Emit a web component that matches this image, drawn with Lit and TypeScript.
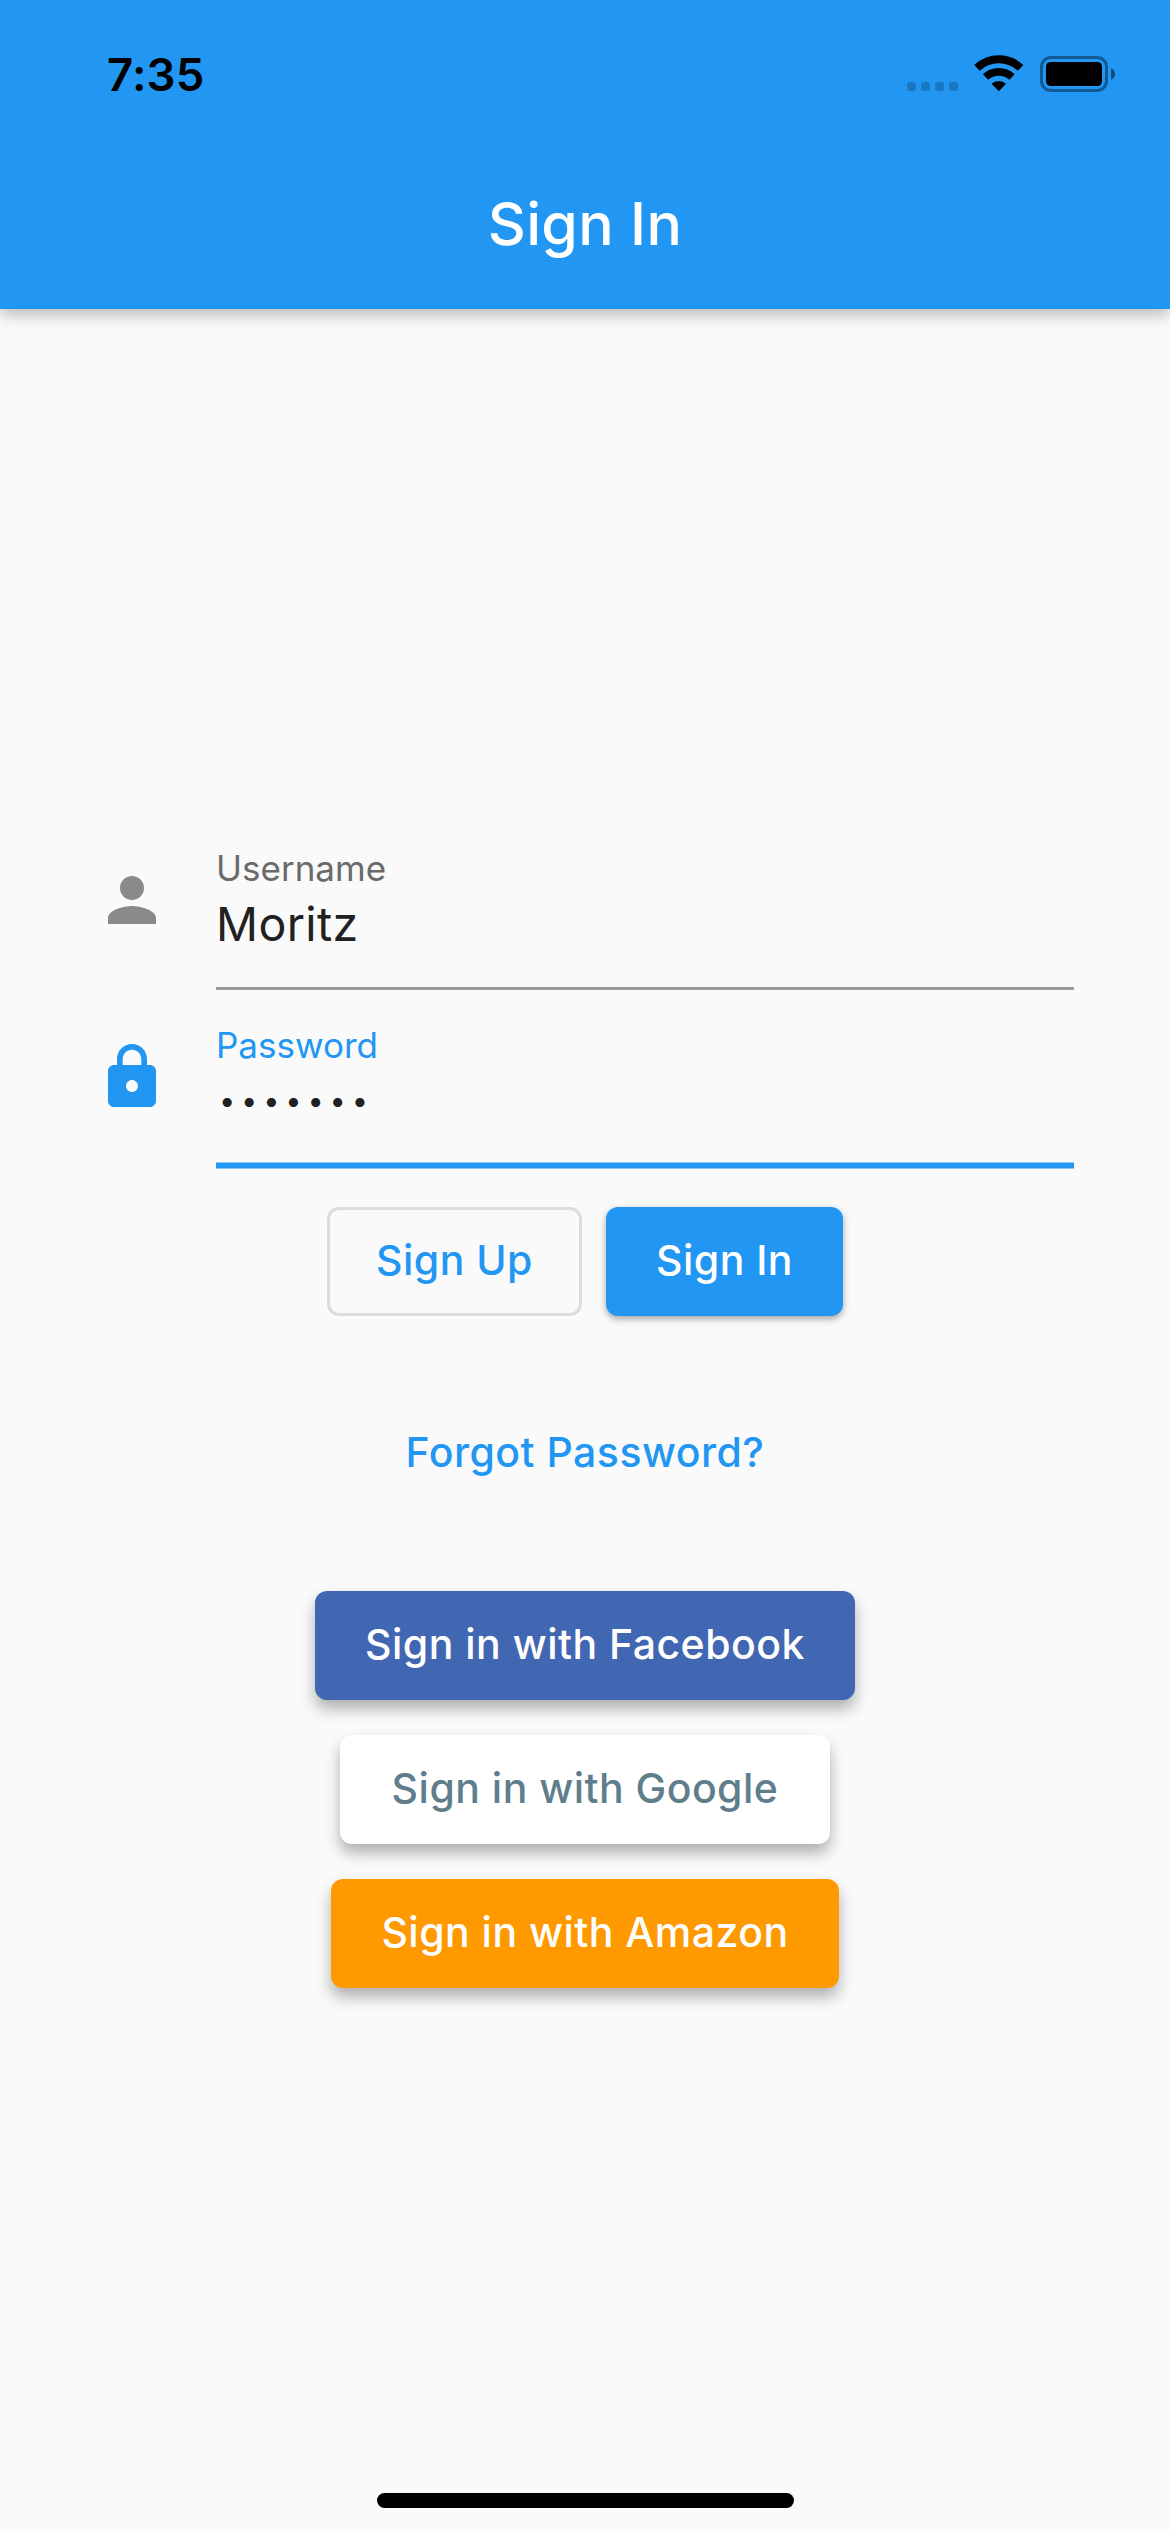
import { LitElement, html, css, svg } from "lit";
import { customElement, property } from "lit/decorators.js";

const FONT = css`"Inter", "Roboto", "Liberation Sans", sans-serif`;

const PERSON =
  "M12 12c2.21 0 4-1.79 4-4s-1.79-4-4-4-4 1.79-4 4 1.79 4 4 4zm0 2c-2.67 0-8 1.34-8 4v2h16v-2c0-2.66-5.33-4-8-4z";
const LOCK =
  "M18 8h-1V6c0-2.76-2.24-5-5-5S7 3.24 7 6v2H6c-1.1 0-2 .9-2 2v10c0 1.1.9 2 2 2h12c1.1 0 2-.9 2-2V10c0-1.1-.9-2-2-2zm-6 9c-1.1 0-2-.9-2-2s.9-2 2-2 2 .9 2 2-.9 2-2 2zm3.1-9H8.9V6c0-1.71 1.39-3.1 3.1-3.1 1.71 0 3.1 1.39 3.1 3.1v2z";

@customElement("status-bar")
export class StatusBar extends LitElement {
  static styles = css`
    :host {
      display: flex;
      justify-content: space-between;
      align-items: flex-start;
      height: 141px;
      box-sizing: border-box;
      padding: 50px 52px 0 107px;
      color: #000;
    }
    .time {
      font: 600 45.5px/50px ${FONT};
      letter-spacing: 0.2px;
    }
    .icons {
      display: block;
    }
  `;
  render() {
    return html`
      <span class="time">7:35</span>
      <svg class="icons" width="211" height="50" viewBox="0 0 211 50">
        ${[0, 14, 28, 42].map(
          (x) => svg`<rect x=${x} y="32" width="9" height="9" rx="3.2" fill="#000" fill-opacity=".2"/>`
        )}
        <g transform="translate(91.8 41.2)" fill="none" stroke="#000" stroke-width="7.8">
          <path d="M-21.8-23.4A32 32 0 0 1 21.8-23.4" />
          <path d="M-13.2-14.2A19.4 19.4 0 0 1 13.2-14.2" />
          <path d="M0 0L-7.2-7.4A10.6 10.6 0 0 1 7.2-7.4Z" fill="#000" stroke="none" />
        </g>
        <rect x="134.5" y="7.5" width="65" height="33" rx="9.5" fill="none" stroke="#000" stroke-opacity=".4" stroke-width="3" />
        <rect x="139" y="12" width="56" height="24" rx="4.5" fill="#000" />
        <path d="M204 18.2c2.6 1 4 3.2 4 5.8s-1.4 4.800-4 5.800z" fill="#000" fill-opacity=".5" />
      </svg>
    `;
  }
}

@customElement("text-field")
export class TextField extends LitElement {
  @property() label = "";
  @property() value = "";
  @property() icon = "";
  @property({ type: Boolean, reflect: true }) focused = false;
  @property({ type: Boolean, reflect: true }) secret = false;

  static styles = css`
    :host {
      display: grid;
      grid-template-columns: 72px 1fr;
      column-gap: 48px;
      font-family: ${FONT};
      color: #8a8a8a;
    }
    :host([focused]) {
      color: #2196f3;
    }
    .icon {
      width: 72px;
      height: 72px;
      margin-top: 17px;
      fill: currentColor;
    }
    .box {
      display: flex;
      flex-direction: column;
    }
    .label {
      font-size: 35px;
      line-height: 43px;
      color: #6a6a6a;
    }
    :host([focused]) .label {
      color: inherit;
    }
    .value {
      font-size: 46.5px;
      line-height: 68px;
      letter-spacing: 0.4px;
      color: #212121;
    }
    :host([secret]) .value {
      padding-left: 3px;
      font-size: 29px;
      letter-spacing: 5.8px;
    }
    .line {
      height: 3px;
      margin-top: 29px;
      background: #9b9b9b;
    }
    :host([focused]) .line {
      height: 7px;
      margin-top: 27px;
      background: linear-gradient(#8ec8f6 1px, #2196f3 1px 6px, #8ec8f6 6px);
    }
  `;
  render() {
    return html`
      <svg class="icon" viewBox="0 0 24 24"><path d=${this.icon} /></svg>
      <div class="box">
        <span class="label">${this.label}</span>
        <span class="value">${this.secret ? "•".repeat(this.value.length) : this.value}</span>
        <div class="line"></div>
      </div>
    `;
  }
}

@customElement("app-root")
export class AppRoot extends LitElement {
  static styles = css`
    :host {
      display: flex;
      flex-direction: column;
      width: 1170px;
      height: 2532px;
      background: #fafafa;
      font-family: ${FONT};
    }
    .header {
      height: 309px;
      background: #2196f3;
      box-shadow: 0 5px 15px rgba(0, 0, 0, 0.28);
    }
    .title {
      margin: 0;
      padding-top: 43px;
      text-align: center;
      font-size: 59px;
      font-weight: 500;
      line-height: 80px;
      letter-spacing: 0.3px;
      color: #fff;
    }
    .main {
      flex: 1;
      display: flex;
      flex-direction: column;
      align-items: center;
      padding: 538px 96px 0;
    }
    .fields {
      align-self: stretch;
      display: flex;
      flex-direction: column;
      gap: 34px;
    }
    .actions {
      display: flex;
      gap: 24px;
      margin-top: 38px;
    }
    .providers {
      display: flex;
      flex-direction: column;
      align-items: center;
      gap: 35px;
      margin-top: 85px;
    }
    .btn {
      display: flex;
      align-items: center;
      justify-content: center;
      box-sizing: border-box;
      height: 109px;
      padding: 0 0 3px;
      border: 0;
      border-radius: 12px;
      background: none;
      font: 500 41px/48px ${FONT};
      letter-spacing: 0.48px;
      white-space: nowrap;
      color: #fff;
    }
    .signup {
      width: 255px;
      border: 3px solid #dcdcdc;
      color: #2196f3;
    }
    .signin {
      width: 237px;
      background: #2196f3;
      box-shadow: 0 3px 7px rgba(0, 0, 0, 0.35);
    }
    .forgot {
      height: 108px;
      margin-top: 82px;
      padding-bottom: 1px;
      color: #2196f3;
    }
    .provider {
      box-shadow: 0 9px 15px rgba(0, 0, 0, 0.3);
    }
    .facebook {
      width: 540px;
      background: #4267b2;
    }
    .google {
      width: 490px;
      background: #fff;
      color: #607d8b;
    }
    .amazon {
      width: 508px;
      background: #ff9900;
    }
    .home {
      align-self: center;
      width: 417px;
      height: 15px;
      margin-bottom: 24px;
      border-radius: 8px;
      background: #000;
    }
  `;
  render() {
    return html`
      <header class="header">
        <status-bar></status-bar>
        <h1 class="title">Sign In</h1>
      </header>
      <main class="main">
        <div class="fields">
          <text-field label="Username" value="Moritz" .icon=${PERSON}></text-field>
          <text-field label="Password" value="1234567" .icon=${LOCK} focused secret></text-field>
        </div>
        <div class="actions">
          <button class="btn signup">Sign Up</button>
          <button class="btn signin">Sign In</button>
        </div>
        <button class="btn forgot">Forgot Password?</button>
        <div class="providers">
          <button class="btn provider facebook">Sign in with Facebook</button>
          <button class="btn provider google">Sign in with Google</button>
          <button class="btn provider amazon">Sign in with Amazon</button>
        </div>
      </main>
      <div class="home"></div>
    `;
  }
}
